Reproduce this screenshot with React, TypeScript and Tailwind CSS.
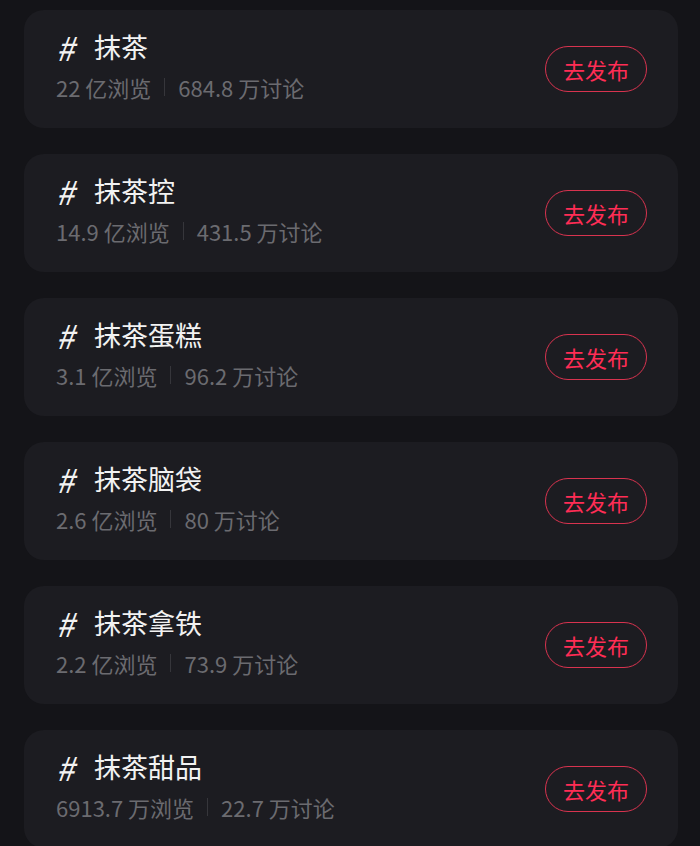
import React from "react";

type Topic = {
  name: string;
  views: string;
  talks: string;
};

const topics: Topic[] = [
  { name: "抹茶", views: "22 亿浏览", talks: "684.8 万讨论" },
  { name: "抹茶控", views: "14.9 亿浏览", talks: "431.5 万讨论" },
  { name: "抹茶蛋糕", views: "3.1 亿浏览", talks: "96.2 万讨论" },
  { name: "抹茶脑袋", views: "2.6 亿浏览", talks: "80 万讨论" },
  { name: "抹茶拿铁", views: "2.2 亿浏览", talks: "73.9 万讨论" },
  { name: "抹茶甜品", views: "6913.7 万浏览", talks: "22.7 万讨论" },
];

const font = {
  fontFamily: '"Noto Sans CJK SC", "Noto Sans", sans-serif',
};

const TopicCard = ({ topic }: { topic: Topic }) => {
  return (
    <div className="h-[118px] shrink-0 rounded-[20px] bg-[#1c1c21] pl-[32px] pr-[31px] flex items-center justify-between">
      <div className="mb-[6px] flex flex-col gap-[8px]">
        <div className="flex items-center text-[27px] leading-[34px] text-[#f2f2f2]">
          <span className="w-[38px] text-[33px] leading-[34px] italic">#</span>
          <span>{topic.name}</span>
        </div>
        <div className="flex items-center text-[22px] leading-[30px] text-[#6b6b70]">
          <span>{topic.views}</span>
          <span className="mx-[13px] h-[18px] w-px bg-[#36363b]" />
          <span>{topic.talks}</span>
        </div>
      </div>
      <button className="h-[46px] w-[102px] rounded-full border border-[#d8334f] text-[22px] text-[#ff2d55] flex items-center justify-center">
        去发布
      </button>
    </div>
  );
};

export default function App() {
  return (
    <div
      className="h-[846px] w-[700px] overflow-hidden bg-[#141418] pl-[24px] pr-[22px] pt-[10px] flex flex-col gap-[26px]"
      style={font}
    >
      {topics.map((t) => (
        <TopicCard key={t.name} topic={t} />
      ))}
    </div>
  );
}
